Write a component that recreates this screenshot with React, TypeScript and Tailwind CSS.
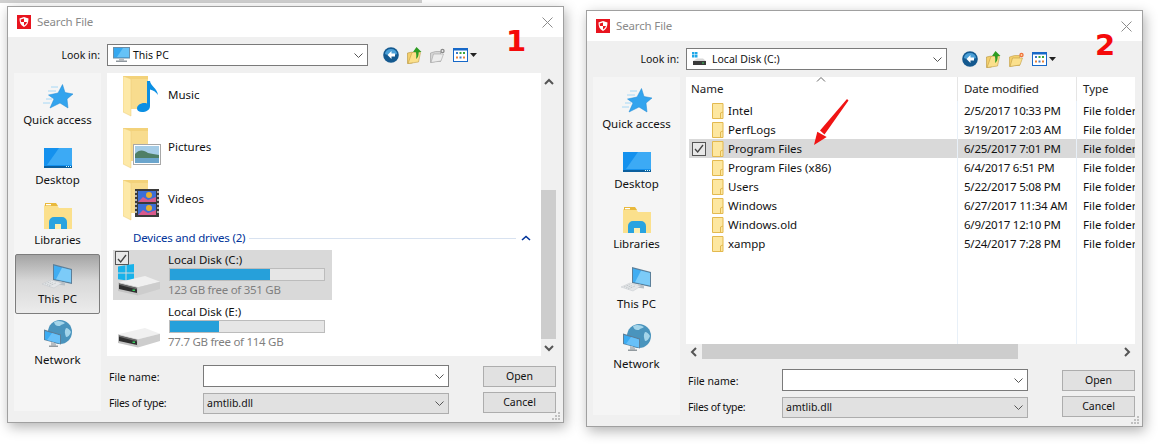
import type { ReactNode } from 'react';

const Shield = () => (
  <svg width="14" height="14" viewBox="0 0 14 14" className="shrink-0">
    <rect width="14" height="14" fill="#e8141f" />
    <path d="M7 2l4.500 1.400c0 4-1.200 6.900-4.500 8.600C3.700 10.300 2.500 7.400 2.500 3.400z" fill="#fff" />
    <path d="M7 7h3c-.5 1.500-1.500 2.600-3 3.500zM7 7H4c-.2-.8-.3-1.500-.3-2.500L7 3.500z" fill="#e8141f" />
  </svg>
);

const MonitorSmall = () => (
  <svg width="17" height="16" viewBox="0 0 17 16" className="shrink-0">
    <rect x="0.500" y="0.500" width="16" height="10.500" fill="#35a8f0" stroke="#6b8ea8" />
    <path d="M10 1h6v9H4z" fill="#66c2f7" />
    <rect x="6" y="11.500" width="5" height="2" fill="#b5bcc2" />
    <rect x="3" y="13.500" width="11" height="1.500" fill="#8f979e" />
  </svg>
);

const DriveSmall = () => (
  <svg width="14" height="16" viewBox="0 0 14 16" className="shrink-0">
    <rect x="0" y="1" width="2.500" height="2.500" fill="#1ea7e8" />
    <rect x="3" y="1" width="2.500" height="2.500" fill="#1ea7e8" />
    <rect x="0" y="4" width="2.500" height="2.500" fill="#1ea7e8" />
    <rect x="3" y="4" width="2.500" height="2.500" fill="#1ea7e8" />
    <path d="M1 10l4-2.500h6l3 2.500z" fill="#d8d8d8" />
    <rect x="1" y="10" width="13" height="4" fill="#3a3a3a" />
    <rect x="10" y="11.500" width="2" height="1" fill="#3bd15f" />
  </svg>
);

const BackIcon = () => (
  <svg width="16" height="16" viewBox="0 0 16 16" className="shrink-0 mr-[1px]">
    <circle cx="8" cy="8" r="7.800" fill="#14598f" />
    <path d="M2 7a6 5 0 0 1 12 0c-2 1.500-10 1.500-12 0z" fill="#4ba0d8" />
    <path d="M8.500 4L4.500 8l4 4V9.500H12v-3H8.500z" fill="#fff" />
  </svg>
);

const UpIcon = () => (
  <svg width="16" height="17" viewBox="0 0 16 17" className="shrink-0">
    <path d="M0.500 6l5-1v11l-5 0.500z" fill="#f4cf6c" stroke="#b5923c" strokeWidth="0.600" />
    <path d="M5 5.500h8.500L11.500 15 1 16.500z" fill="#fbe08c" stroke="#c19e44" strokeWidth="0.600" />
    <path d="M9.500 0L14.500 5h-2.800c0 3.500-.5 5.500-2.700 7 .5-2.500.4-4.500-.2-7H6z" fill="#2d9c22" />
  </svg>
);

const NewFolderIcon = ({ on }: { on: boolean }) => (
  <svg width="16" height="15" viewBox="0 0 16 15" className="shrink-0">
    <path d="M0.500 5l5-1.500 5 0v10l-5 0-5 1z" fill={on ? '#f4cf6c' : '#d4d4d4'} stroke={on ? '#c19e44' : '#9a9a9a'} strokeWidth="0.600" />
    <path d="M3.500 6h10L11 13 1 14.500z" fill={on ? '#fbe08c' : '#ececec'} stroke={on ? '#c19e44' : '#a5a5a5'} strokeWidth="0.600" />
    <circle cx="12.500" cy="3" r="2.200" fill={on ? '#f0703a' : '#8a8a8a'} />
    <circle cx="12.500" cy="3" r="0.900" fill={on ? '#ffd8a0' : '#eee'} />
  </svg>
);

const ViewsIcon = () => (
  <div className="flex items-center gap-[2px]">
    <svg width="15" height="14" viewBox="0 0 15 14">
      <rect x="0.500" y="0.500" width="14" height="13" fill="#fff" stroke="#1668c8" />
      <rect x="0.500" y="0.500" width="14" height="2" fill="#1668c8" />
      <rect x="3" y="4" width="2" height="2" fill="#3b78c8" />
      <rect x="6.500" y="4" width="2" height="2" fill="#3aa53a" />
      <rect x="10" y="4" width="2" height="2" fill="#3aa53a" />
      <rect x="3" y="8.500" width="2" height="2" fill="#e8833a" />
      <rect x="6.500" y="8.500" width="2" height="2" fill="#3b78c8" />
      <rect x="10" y="8.500" width="2" height="2" fill="#e8833a" />
    </svg>
    <svg width="7" height="4" viewBox="0 0 7 4">
      <path d="M0 0h7L3.500 4z" fill="#222" />
    </svg>
  </div>
);

const Star = () => (
  <svg width="30" height="25" viewBox="0 0 30 25">
    <path d="M8 3h7M5 7h8M3 15h6M0 19h7" stroke="#a6d8f6" strokeWidth="1" />
    <path d="M19.500 .5L22 8.500 30 10l-6 5 1 9-8-5-10 5 4-9-5.500-4L15 9z" fill="#33a4ee" stroke="#1e88d4" strokeWidth="0.500" />
  </svg>
);

const DesktopIcon = () => (
  <svg width="28" height="20" viewBox="0 0 28 20">
    <rect width="28" height="20" fill="#1491ee" />
    <path d="M15 0h13v17H3z" fill="#3caaf5" />
    <rect y="18" width="28" height="2" fill="#0b5f9e" />
    <path d="M22 18.500h5" stroke="#dff" strokeWidth="1" strokeDasharray="1 1" />
  </svg>
);

const LibrariesIcon = () => (
  <svg width="28" height="26" viewBox="0 0 28 26">
    <path d="M0 3a1 1 0 0 1 1-1h12l2 3h13v21H0z" fill="#fbe08c" />
    <path d="M1 0h11l2 3H1z" fill="#e9b93c" />
    <rect x="2" y="1" width="5" height="1.300" fill="#fff" />
    <path d="M5 26v-7a5 5 0 0 1 5-5h8a5 5 0 0 1 5 5v7h-6v-5h-6v5z" fill="#29a3e0" />
    <rect x="11" y="21" width="6" height="5" fill="#fdeeb0" />
  </svg>
);

const ThisPcIcon = () => (
  <svg width="31" height="25" viewBox="0 0 31 25">
    <path d="M11 0l19 5v15l-19-4z" fill="#5c7f99" />
    <path d="M12 1.500l17 4.500v12.500L12 15z" fill="#40adf2" />
    <path d="M20 3.800l9 2.200v12.500l-15-3.200z" fill="#7ccbf8" />
    <path d="M17 17l6 1.400v3l-6-.6z" fill="#b8c0c6" />
    <path d="M0 20l9-4 11 3-8 5z" fill="#e4e6e8" stroke="#bcc0c4" strokeWidth="0.400" />
    <path d="M3 20l6-2.500M5 21l6-2.500M7 22l7-3" stroke="#aeb4b8" strokeWidth="0.700" strokeDasharray="1 0.700" />
  </svg>
);

const NetworkIcon = () => (
  <svg width="28" height="28" viewBox="0 0 28 28">
    <circle cx="16" cy="12" r="12" fill="#4a94bd" />
    <path d="M10 2c4-2 8-1 11 1-2 2-4 1-5 3-3 0-5 0-6-4zM22 8c2 0 4 2 5 4-1 3-3 5-5 5-1-3-2-6 0-9z" fill="#a4d5ea" />
    <path d="M0 9.500l17 5v10L0 20z" fill="#5c7f99" />
    <path d="M1 11l15 4.500v8L1 19.500z" fill="#3bacf3" />
    <path d="M8 13l8 2.500v8l-13-3.500z" fill="#68c0f8" />
    <path d="M7 22l5 1.200v2.500H7z" fill="#b6bdc2" />
    <rect x="5" y="25.500" width="9" height="1.500" fill="#929a9f" />
  </svg>
);

const FolderBase = ({ children }: { children?: ReactNode }) => (
  <div className="relative w-[40px] h-[41px] shrink-0">
    <svg width="25" height="41" viewBox="0 0 25 41" className="absolute left-0 top-0">
      <path d="M0 0h25v33H9z" fill="#f3d27a" />
      <path d="M8 3h17v30H8z" fill="#f8dc8e" />
      <path d="M0 0l8 3v37l-8-4z" fill="#fde9a8" stroke="#eccb72" strokeWidth="0.500" />
    </svg>
    {children}
  </div>
);

const MusicFolder = () => (
  <FolderBase>
    <svg width="22" height="32" viewBox="0 0 22 32" className="absolute left-[14px] top-[5px]">
      <path d="M10 0h3c.5 5 7 7 8 14-2-3-5-5-8-5.500V25c0 4-4 6-8 6-3 0-5-1.500-5-3.500C0 24 5 21 10 22.500z" fill="#0b8fe3" />
    </svg>
  </FolderBase>
);

const PicturesFolder = () => (
  <FolderBase>
    <svg width="28" height="21" viewBox="0 0 28 21" className="absolute left-[10px] top-[16px]">
      <rect x="0.500" y="0.500" width="27" height="20" fill="#fff" stroke="#a8a8a8" />
      <rect x="2" y="2" width="24" height="17" fill="#a5cce6" />
      <path d="M2 10c4-5 9-4 13-1 3 1 7 1 11 2v3H2z" fill="#4f7f66" />
      <rect x="2" y="14" width="24" height="5" fill="#6ba5cc" />
    </svg>
  </FolderBase>
);

const VideosFolder = () => (
  <FolderBase>
    <svg width="24" height="28" viewBox="0 0 24 28" className="absolute left-[12px] top-[9px]">
      <rect width="24" height="28" fill="#3a3a3a" />
      <path d="M1 2v24M23 2v24" stroke="#ddd" strokeWidth="1.500" strokeDasharray="2 2" />
      <rect x="3" y="2" width="18" height="11" fill="#3c6fd6" />
      <rect x="3" y="15" width="18" height="11" fill="#3c6fd6" />
      <path d="M3 13l5-5 5 3 8-3v5zM3 26l5-5 5 3 8-3v5z" fill="#d85a8c" />
      <circle cx="14" cy="6" r="3" fill="#e8b030" />
      <circle cx="14" cy="19" r="3" fill="#e8b030" />
    </svg>
  </FolderBase>
);

const DriveIcon = ({ logo }: { logo?: boolean }) => (
  <div className="relative w-[50px] h-[50px] shrink-0">
    {logo && (
      <svg width="16" height="18" viewBox="0 0 16 18" className="absolute left-0 top-[14px]">
        <path d="M0 2.500L7.500 1.300V8.500H0zM8.500 1.100L16 0v8.500H8.500zM0 9.500h7.500v6.800L0 15.200zM8.500 9.500H16V18l-7.500-1.500z" fill="#18b2ea" />
      </svg>
    )}
    <svg width="42" height="22" viewBox="0 0 42 22" className="absolute left-0 top-[25px]">
      <path d="M0 7.300L27 1l15 5.700L20 12.300z" fill="#f0f0f0" />
      <path d="M20 12.300L42 6.700V14L20 20.500z" fill="#cdcdcd" />
      <path d="M0 7.300l20 5v8.200L0 16z" fill="#c4c4c4" />
      <path d="M1 8.500l18 4.500v5L1 14z" fill="#2f2f2f" />
      <path d="M1 8.500l18 4.500v1.400L1 9.800z" fill="#6a6a6a" />
      <rect x="14.500" y="14.500" width="2.500" height="1.500" fill="#37d05e" />
    </svg>
  </div>
);

const SmallFolder = () => (
  <svg width="12" height="16" viewBox="0 0 12 16" className="shrink-0">
    <path d="M.5.500h10.500v15H.5z" fill="#fde7a0" stroke="#e3b94f" />
    <path d="M8.500 15.500V10l2.500-1" fill="none" stroke="#e3b94f" />
  </svg>
);

const Check = () => (
  <div className="w-[14px] h-[14px] border border-[#555] bg-white/40 flex items-center justify-center">
    <svg width="10" height="9" viewBox="0 0 10 9">
      <path d="M1 5l2.700 3L9 1" fill="none" stroke="#444" strokeWidth="1.300" />
    </svg>
  </div>
);

const ThinChevron = () => (
  <svg width="9" height="5" viewBox="0 0 9 5" className="shrink-0">
    <path d="M.5.500l4 4 4-4" fill="none" stroke="#555" />
  </svg>
);

const ScrollChevron = ({ dir }: { dir: 'up' | 'down' | 'left' | 'right' }) => {
  const paths = {
    up: 'M1 6l4-4 4 4',
    down: 'M1 2l4 4 4-4',
    left: 'M7 1L3 5l4 4',
    right: 'M3 1l4 4-4 4',
  };
  return (
    <svg width="10" height={dir === 'up' || dir === 'down' ? 8 : 10} viewBox={dir === 'up' || dir === 'down' ? '0 0 10 8' : '0 0 10 10'}>
      <path d={paths[dir]} fill="none" stroke="#555" strokeWidth="2" />
    </svg>
  );
};

const places = [
  { label: 'Quick access', icon: <Star />, h: 'pt-[9px]' },
  { label: 'Desktop', icon: <DesktopIcon />, h: 'pt-[11px]' },
  { label: 'Libraries', icon: <LibrariesIcon />, h: 'pt-[9px]' },
  { label: 'This PC', icon: <ThisPcIcon />, h: 'pt-[8px]' },
  { label: 'Network', icon: <NetworkIcon />, h: 'pt-[7px]' },
];

function Sidebar({ active }: { active?: string }) {
  return (
    <div className="w-[87px] h-[338px] bg-[#f5f5f5] pt-[1px] flex flex-col items-center shrink-0">
      {places.map((p) => (
        <div
          key={p.label}
          className={`w-[85px] h-[60px] flex flex-col items-center rounded-[2px] ${p.h} ${
            p.label === active ? 'bg-gradient-to-b from-[#a4a4a4] via-[#d8d8d8] via-45% to-[#ececec] border border-[#7d7d7d]' : ''
          }`}
        >
          <div className="h-[26px] flex items-center justify-center">{p.icon}</div>
          <span className="mt-auto mb-[6px] leading-[16px] text-[#111]">{p.label}</span>
        </div>
      ))}
    </div>
  );
}

function DriveRow({ name, free, pct, selected }: { name: string; free: string; pct: string; selected?: boolean }) {
  return (
    <div className={`relative w-[219px] h-[50px] flex pl-[5px] ${selected ? 'bg-[#d9d9d9]' : ''}`}>
      {selected && (
        <div className="absolute left-[2px] top-[1px]">
          <Check />
        </div>
      )}
      <DriveIcon logo={selected} />
      <div className="w-[157px] pt-[2px]">
        <div className="leading-[16px] text-[#111]">{name}</div>
        <div className="h-[13px] w-[156px] ml-[1px] bg-[#e6e6e6] border border-[#bcbcbc]">
          <div className={`h-full bg-[#26a0da] ${pct}`} />
        </div>
        <div className="leading-[17px] text-[#7f7f7f] tracking-[-0.28px]">{free}</div>
      </div>
    </div>
  );
}

const FolderSlot = ({ children }: { children: ReactNode }) => <div className="w-[45px] shrink-0">{children}</div>;

function TilesList() {
  return (
    <div className="h-[283px] flex">
      <div className="w-[434px] bg-white pt-[3px] flex flex-col">
        {[
          { name: 'Music', icon: <MusicFolder /> },
          { name: 'Pictures', icon: <PicturesFolder /> },
          { name: 'Videos', icon: <VideosFolder /> },
        ].map((f) => (
          <div key={f.name} className="h-[52px] flex pl-[16px]">
            <FolderSlot>{f.icon}</FolderSlot>
            <span className="leading-[16px] pt-[11px] text-[#111]">{f.name}</span>
          </div>
        ))}
        <div className="h-[12px] mb-[6px] flex items-center pl-[26px] pr-[9px]">
          <span className="text-[#003399] leading-[16px] tracking-[-0.2px]">Devices and drives (2)</span>
          <div className="flex-1 h-px bg-[#d8e2f0] mx-[4px]" />
          <svg width="10" height="6" viewBox="0 0 10 6" className="mx-[1px]">
            <path d="M1 5l4-3.500L9 5" fill="none" stroke="#003399" strokeWidth="1.600" />
          </svg>
        </div>
        <div className="pl-[6px] flex flex-col gap-[2px]">
          <DriveRow name="Local Disk (C:)" free="123 GB free of 351 GB" pct="w-[65%]" selected />
          <DriveRow name="Local Disk (E:)" free="77.7 GB free of 114 GB" pct="w-[32%]" />
        </div>
      </div>
      <div className="w-[15px] flex flex-col items-center bg-[#f0f0f0]">
        <div className="h-[17px] flex items-center justify-center">
          <ScrollChevron dir="up" />
        </div>
        <div className="mt-[100px] h-[149px] w-[15px] bg-[#cdcdcd]" />
        <div className="h-[17px] flex items-center justify-center">
          <ScrollChevron dir="down" />
        </div>
      </div>
    </div>
  );
}

const rows = [
  ['Intel', '2/5/2017 10:33 PM'],
  ['PerfLogs', '3/19/2017 2:03 AM'],
  ['Program Files', '6/25/2017 7:01 PM'],
  ['Program Files (x86)', '6/4/2017 6:51 PM'],
  ['Users', '5/22/2017 5:08 PM'],
  ['Windows', '6/27/2017 11:34 AM'],
  ['Windows.old', '6/9/2017 12:10 PM'],
  ['xampp', '5/24/2017 7:28 PM'],
];

function DetailsList() {
  return (
    <div className="relative h-[283px] flex flex-col">
      <div className="flex-1 bg-white flex flex-col overflow-hidden">
        <div className="h-[24px] flex shrink-0 relative">
          <div className="w-[271px] pl-[5px] pt-[4px] leading-[16px] text-[#222]">Name</div>
          <div className="w-[119px] border-l border-[#e5e5e5] pl-[6px] pt-[4px] leading-[16px] text-[#222] tracking-[-0.15px]">Date modified</div>
          <div className="flex-1 border-l border-[#e5e5e5] pl-[6px] pt-[4px] leading-[16px] text-[#222]">Type</div>
          <svg width="10" height="5" viewBox="0 0 10 5" className="absolute left-[130px] top-0">
            <path d="M1 4.500l4-4 4 4" fill="none" stroke="#666" />
          </svg>
        </div>
        {rows.map(([name, date]) => {
          const selected = name === 'Program Files';
          return (
            <div key={name} className={`h-[19px] flex shrink-0 ml-[3px] leading-[19px] text-[#111] ${selected ? 'bg-[#d9d9d9]' : ''}`}>
              <div className="w-[268px] flex items-center">
                <div className="w-[23px] pl-[3px] shrink-0">{selected && <Check />}</div>
                <SmallFolder />
                <span className="pl-[4px]">{name}</span>
              </div>
              <div className="w-[119px] border-l border-[#e8f0f8] pl-[6px] tracking-[-0.24px]">{date}</div>
              <div className="flex-1 border-l border-[#e8f0f8] pl-[6px] whitespace-nowrap overflow-hidden">File folder</div>
            </div>
          );
        })}
        <div className="flex-1 flex ml-[3px]">
          <div className="w-[268px]" />
          <div className="w-[119px] border-l border-[#e8f0f8]" />
          <div className="flex-1 border-l border-[#e8f0f8]" />
        </div>
      </div>
      <div className="h-[16px] flex items-center shrink-0">
        <div className="w-[16px] flex justify-center">
          <ScrollChevron dir="left" />
        </div>
        <div className="w-[316px] h-[15px] bg-[#cdcdcd] self-start" />
        <div className="ml-auto w-[17px] flex justify-center">
          <ScrollChevron dir="right" />
        </div>
      </div>
      {/* red arrow drawn over the list */}
      <svg width="50" height="60" viewBox="0 0 50 60" className="absolute left-[120px] top-[20px]">
        <path d="M41 2l1.500 1.500L18.500 37.500 14 33.500zM8 48l3.300-13.300 9.400 5.300z" fill="#f01414" />
      </svg>
    </div>
  );
}

function Dialog({
  combo,
  comboIcon,
  comboGap,
  active,
  newFolder,
  number,
  numberPos,
  topMargin,
  children,
}: {
  combo: string;
  comboIcon: ReactNode;
  comboGap: string;
  active?: string;
  newFolder: boolean;
  number: string;
  numberPos: string;
  topMargin: string;
  children: ReactNode;
}) {
  return (
    <div className={`relative w-[557px] h-[417px] border border-[#a0a0a0] bg-[#f0f0f0] shadow-[2px_4px_12px_rgba(0,0,0,0.3)] shrink-0 ${topMargin}`}>
      <div className="h-[30px] bg-white flex items-center pl-[9px]">
        <Shield />
        <span className="ml-[6px] text-[#8a8a8a] tracking-[-0.15px]">Search File</span>
        <svg width="11" height="11" viewBox="0 0 11 11" className="ml-auto mr-[10px]">
          <path d="M.5.500l10 10M10.500.500l-10 10" stroke="#8c8c8c" />
        </svg>
      </div>
      <div className="pl-[6px] pr-[7px]">
        <div className="h-[22px] mt-[7px] mb-[7px] flex items-center">
          <div className="w-[87px] text-right pr-[1px] pt-[2px] text-[#111] text-[10.5px]">Look in:</div>
          <div className="ml-[6px] w-[261px] h-[22px] bg-white border border-[#7a7a7a] flex items-center pl-[5px] pr-[4px]">
            {comboIcon}
            <span className={`pt-[2px] text-[#111] text-[10.5px] ${comboGap}`}>{combo}</span>
            <div className="ml-auto">
              <ThinChevron />
            </div>
          </div>
          <div className="ml-[15px] flex items-center gap-[7px]">
            <BackIcon />
            <UpIcon />
            <NewFolderIcon on={newFolder} />
            <ViewsIcon />
          </div>
        </div>
        <div className="flex gap-[6px]">
          <Sidebar active={active} />
          <div className="w-[449px]">
            {children}
            <div className="flex mt-[9px] text-[10.5px]">
              <div className="w-[342px]">
                <div className="flex items-center h-[22px]">
                  <span className="w-[96px] pl-[2px] pt-[3px] text-[#111]">File name:</span>
                  <div className="w-[246px] h-[22px] bg-white border border-[#7a7a7a] flex items-center justify-end pr-[4px]">
                    <ThinChevron />
                  </div>
                </div>
                <div className="flex items-center h-[21px] mt-[6px]">
                  <span className="w-[96px] pl-[2px] text-[#111] tracking-[-0.3px]">Files of type:</span>
                  <div className="w-[246px] h-[21px] bg-[#e1e1e1] border border-[#adadad] flex items-center justify-between pl-[3px] pr-[4px]">
                    <span className="text-[#111]">amtlib.dll</span>
                    <ThinChevron />
                  </div>
                </div>
              </div>
              <div className="ml-auto w-[73px] pt-[1px] flex flex-col gap-[5px]">
                <button className="h-[21px] bg-[#e1e1e1] border border-[#adadad] text-[#111]">Open</button>
                <button className="h-[21px] bg-[#e1e1e1] border border-[#adadad] text-[#111]">Cancel</button>
              </div>
            </div>
          </div>
        </div>
      </div>
      <svg width="9" height="8" viewBox="0 0 9 8" className="absolute right-[2px] bottom-[2px]">
        <path d="M6 0h2v2H6zM3 3h2v2H3zM6 3h2v2H6zM0 6h2v2H0zM3 6h2v2H3zM6 6h2v2H6z" fill="#c0c0c0" />
      </svg>
      <span className={`absolute font-['DejaVu_Sans',sans-serif] font-bold text-[29px] leading-[30px] text-[#f50a0a] ${numberPos}`}>{number}</span>
    </div>
  );
}

export default function App() {
  return (
    <div className="w-[1158px] h-[444px] bg-white overflow-hidden font-['Noto_Sans',sans-serif] text-[11.5px]">
      <div className="h-[3px] w-[422px] bg-[#d0d0d0]" />
      <div className="flex items-start pl-[7px] gap-[22px]">
        <Dialog
          combo="This PC"
          comboIcon={<MonitorSmall />}
          comboGap="ml-[3px]"
          active="This PC"
          newFolder={false}
          number="1"
          numberPos="left-[498px] top-[19px]"
          topMargin="mt-[3px]"
        >
          <TilesList />
        </Dialog>
        <Dialog
          combo="Local Disk (C:)"
          comboIcon={<DriveSmall />}
          comboGap="ml-[6px]"
          newFolder
          number="2"
          numberPos="left-[508px] top-[19px]"
          topMargin="mt-[7px]"
        >
          <DetailsList />
        </Dialog>
      </div>
    </div>
  );
}
